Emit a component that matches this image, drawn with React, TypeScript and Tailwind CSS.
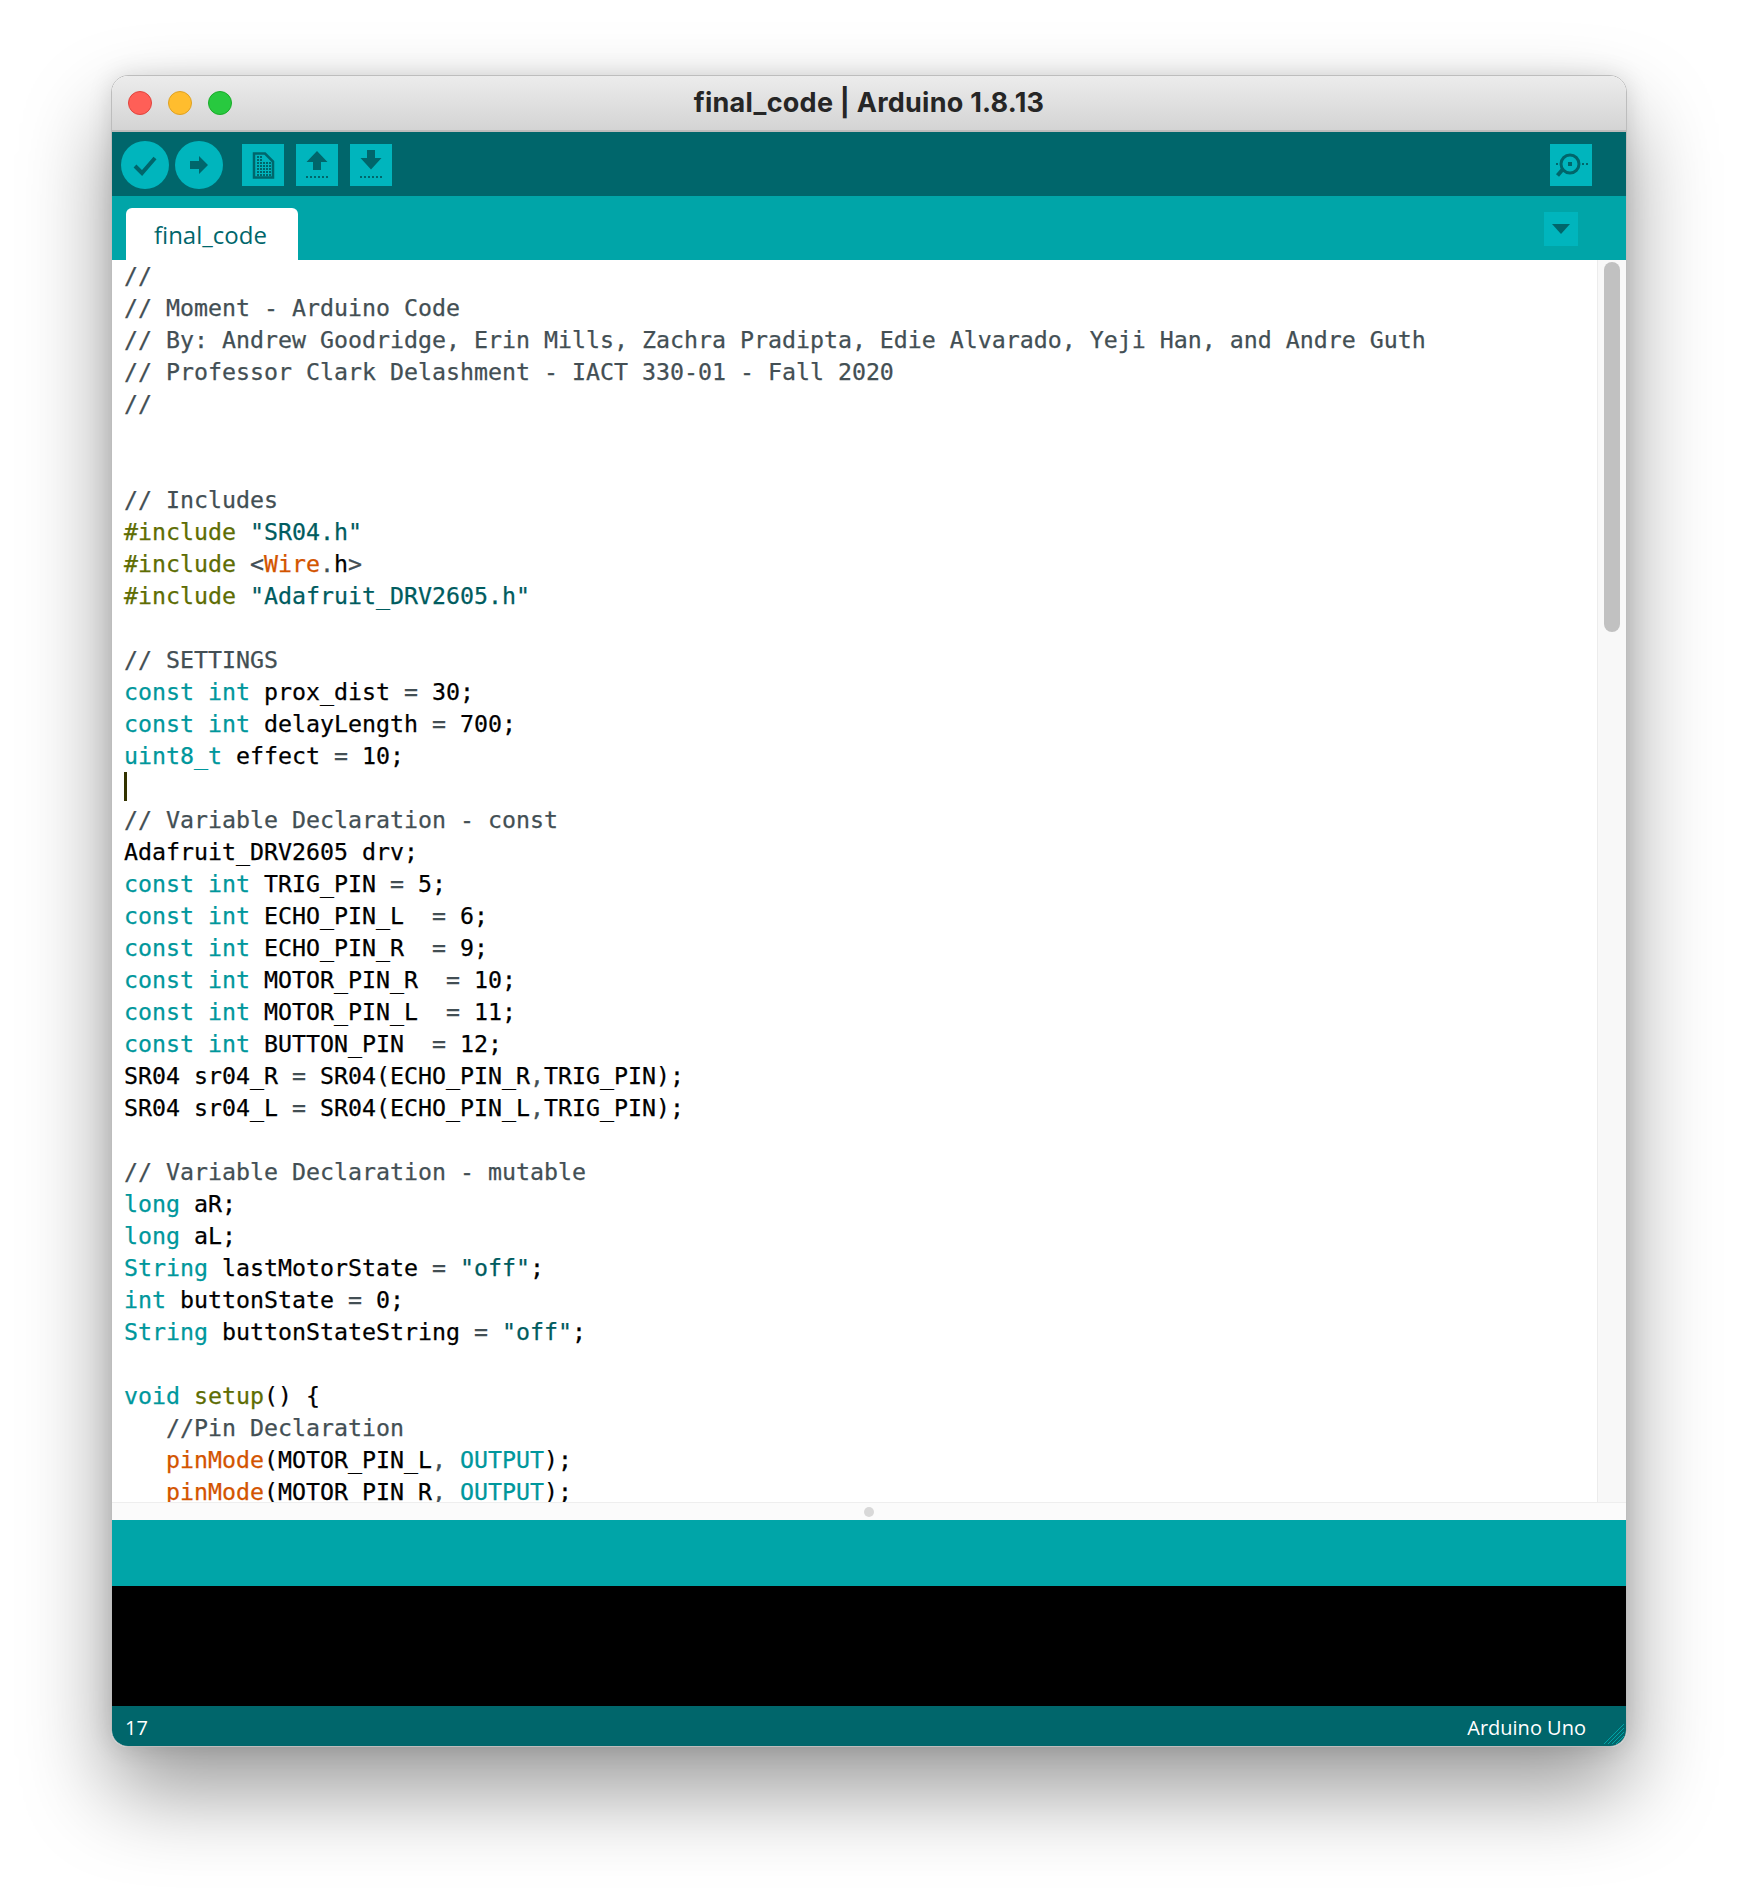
import React from "react";

type Tok = [string, string];

const tone: Record<string, string> = {
  c: "text-[#434f54]",
  k: "text-[#00979c]",
  f: "text-[#d35400]",
  s: "text-[#005c5f]",
  p: "text-[#5e6d03]",
  o: "text-[#434f54]",
  n: "text-black",
};

const constInt = (name: string, spaces: string, val: string): Tok[] => [
  ["k", "const int"],
  ["n", ` ${name}${spaces}`],
  ["o", "="],
  ["n", ` ${val};`],
];

const lines: Tok[][] = [
  [["c", "//"]],
  [["c", "// Moment - Arduino Code"]],
  [["c", "// By: Andrew Goodridge, Erin Mills, Zachra Pradipta, Edie Alvarado, Yeji Han, and Andre Guth"]],
  [["c", "// Professor Clark Delashment - IACT 330-01 - Fall 2020"]],
  [["c", "//"]],
  [],
  [],
  [["c", "// Includes"]],
  [["p", "#include"], ["s", ' "SR04.h"']],
  [["p", "#include"], ["o", " <"], ["f", "Wire"], ["o", "."], ["n", "h"], ["o", ">"]],
  [["p", "#include"], ["s", ' "Adafruit_DRV2605.h"']],
  [],
  [["c", "// SETTINGS"]],
  constInt("prox_dist", " ", "30"),
  constInt("delayLength", " ", "700"),
  [["k", "uint8_t"], ["n", " effect "], ["o", "="], ["n", " 10;"]],
  [],
  [["c", "// Variable Declaration - const"]],
  [["n", "Adafruit_DRV2605 drv;"]],
  constInt("TRIG_PIN", " ", "5"),
  constInt("ECHO_PIN_L", "  ", "6"),
  constInt("ECHO_PIN_R", "  ", "9"),
  constInt("MOTOR_PIN_R", "  ", "10"),
  constInt("MOTOR_PIN_L", "  ", "11"),
  constInt("BUTTON_PIN", "  ", "12"),
  [["n", "SR04 sr04_R "], ["o", "="], ["n", " SR04(ECHO_PIN_R"], ["o", ","], ["n", "TRIG_PIN);"]],
  [["n", "SR04 sr04_L "], ["o", "="], ["n", " SR04(ECHO_PIN_L"], ["o", ","], ["n", "TRIG_PIN);"]],
  [],
  [["c", "// Variable Declaration - mutable"]],
  [["k", "long"], ["n", " aR;"]],
  [["k", "long"], ["n", " aL;"]],
  [["k", "String"], ["n", " lastMotorState "], ["o", "="], ["s", ' "off"'], ["n", ";"]],
  [["k", "int"], ["n", " buttonState "], ["o", "="], ["n", " 0;"]],
  [["k", "String"], ["n", " buttonStateString "], ["o", "="], ["s", ' "off"'], ["n", ";"]],
  [],
  [["k", "void"], ["n", " "], ["p", "setup"], ["n", "() {"]],
  [["c", "   //Pin Declaration"]],
  [["n", "   "], ["f", "pinMode"], ["n", "(MOTOR_PIN_L"], ["o", ","], ["n", " "], ["k", "OUTPUT"], ["n", ");"]],
  [["n", "   "], ["f", "pinMode"], ["n", "(MOTOR_PIN_R"], ["o", ","], ["n", " "], ["k", "OUTPUT"], ["n", ");"]],
];

const Dots = ({ y }: { y: number }) => (
  <path d={`M10 ${y}h22`} stroke="#00666b" strokeWidth="2" strokeDasharray="2 2" fill="none" />
);

const SquareBtn = ({ children }: { children: React.ReactNode }) => (
  <div className="h-[42px] w-[42px] bg-[#00b5bd]">
    <svg viewBox="0 0 42 42" className="h-[42px] w-[42px]">
      {children}
    </svg>
  </div>
);

const RoundBtn = ({ children }: { children: React.ReactNode }) => (
  <div className="h-12 w-12 rounded-full bg-[#00b5bd]">
    <svg viewBox="0 0 48 48" className="h-12 w-12">
      {children}
    </svg>
  </div>
);

const DocDots = () => {
  const cells = [];
  for (let r = 0; r < 7; r++) {
    for (let c = 0; c < 5; c++) {
      if (r < 2 && c > 1) continue;
      cells.push(<rect key={`${r}-${c}`} x={15 + c * 3} y={12 + r * 3} width="2" height="2" fill="#00666b" />);
    }
  }
  return <>{cells}</>;
};

export default function App() {
  return (
    <div className="min-h-[1894px] bg-white pt-[75px] pl-[111px] font-['Liberation_Sans',sans-serif]">
      <div className="flex h-[1672px] w-[1516px] flex-col overflow-hidden rounded-[17px] border border-[#bdbdbd] shadow-[0_44px_88px_rgba(0,0,0,0.4),0_0_24px_rgba(0,0,0,0.12)]">
        {/* title bar */}
        <div className="relative flex h-[56px] shrink-0 items-center justify-center border-b-2 border-[#bcbcbc] bg-gradient-to-b from-[#ececec] to-[#d4d4d4]">
          <div className="absolute left-[16px] top-[15px] flex gap-4">
            <span className="h-6 w-6 rounded-full border border-[#e0443e] bg-[#ff5f57]" />
            <span className="h-6 w-6 rounded-full border border-[#dea123] bg-[#ffbd2e]" />
            <span className="h-6 w-6 rounded-full border border-[#1aab29] bg-[#28c93f]" />
          </div>
          <span className="font-['Inter',sans-serif] text-[27px] font-bold tracking-[0.25px] text-[#262626]">final_code | Arduino 1.8.13</span>
        </div>

        {/* toolbar */}
        <div className="flex h-[64px] shrink-0 items-center bg-[#00666b] pl-[9px] pr-[34px] pt-[2px]">
          <div className="flex gap-[6px]">
            <RoundBtn>
              <path d="M14 25l7 7 13-15" fill="none" stroke="#00666b" strokeWidth="4" />
            </RoundBtn>
            <RoundBtn>
              <path d="M15 20h9v-5l9 9-9 9v-5h-9z" fill="#00666b" />
            </RoundBtn>
          </div>
          <div className="ml-[19px] flex gap-3">
            <SquareBtn>
              <path d="M12 9.5h11l8 8v16h-19z" fill="none" stroke="#00666b" strokeWidth="2.5" />
              <DocDots />
            </SquareBtn>
            <SquareBtn>
              <path d="M21 7l10.5 11h-6.5v8h-8v-8h-6.5z" fill="#00666b" />
              <Dots y={33} />
            </SquareBtn>
            <SquareBtn>
              <path d="M17 6h8v8h6.5L21 25.5 10.5 14H17z" fill="#00666b" />
              <Dots y={33} />
            </SquareBtn>
          </div>
          <div className="ml-auto">
            <SquareBtn>
              <circle cx="20" cy="20" r="9" fill="none" stroke="#00666b" strokeWidth="3" />
              <rect x="18" y="18" width="4" height="4" fill="#00666b" />
              <path d="M13 25l-5.5 6.5" stroke="#00666b" strokeWidth="4" />
              <path d="M6 20h2M32 20h2M36 20h2" stroke="#00666b" strokeWidth="2" />
            </SquareBtn>
          </div>
        </div>

        {/* tab row */}
        <div className="flex h-[64px] shrink-0 items-end justify-between bg-[#00a5a8] pl-[14px] pr-[48px]">
          <div className="flex h-[52px] w-[172px] items-center rounded-t-[6px] bg-white pl-[28px] pt-[2px] font-['Open_Sans',sans-serif] text-[24px] text-[#00666b]">
            final_code
          </div>
          <div className="mb-[14px] flex h-[34px] w-[34px] items-center justify-center bg-[#00b5bd]">
            <svg viewBox="0 0 18 10" className="h-[10px] w-[18px]">
              <path d="M0 0h18l-9 10z" fill="#00666b" />
            </svg>
          </div>
        </div>

        {/* editor */}
        <div className="flex h-[1242px] shrink-0 overflow-hidden bg-white">
          <div className="flex-1 pl-[12px] font-['DejaVu_Sans_Mono',monospace] text-[23.25px] leading-[32px] [-webkit-text-stroke:0.25px]">
            {lines.map((line, i) => (
              <div key={i} className="relative h-[32px] whitespace-pre">
                {i === 16 && <span className="absolute left-0 top-0 h-[29px] w-[3px] bg-[#333300]" />}
                {line.map(([kind, text], j) => (
                  <span key={j} className={tone[kind]}>
                    {text}
                  </span>
                ))}
              </div>
            ))}
          </div>
          <div className="w-[29px] border-l border-[#ececec] bg-[#f8f8f8] pl-[6px] pt-[2px]">
            <div className="h-[370px] w-4 rounded-full bg-[#c1c1c1]" />
          </div>
        </div>

        {/* split handle */}
        <div className="flex h-[18px] shrink-0 items-center justify-center border-t border-[#eeeeee] bg-[#fbfbfb]">
          <span className="h-[10px] w-[10px] rounded-full bg-[#d8d8d8]" />
        </div>

        <div className="h-[66px] shrink-0 bg-[#00a5a8]" />
        <div className="h-[120px] shrink-0 bg-black" />

        {/* footer */}
        <div className="relative flex flex-1 items-center justify-between bg-[#00666b] pl-[13px] pr-[40px] pt-[4px] font-['Open_Sans',sans-serif] text-[20px] text-white">
          <span>17</span>
          <span>Arduino Uno</span>
          <svg viewBox="0 0 24 24" className="absolute bottom-0 right-0 h-6 w-6">
            <path d="M2 22L22 2M6 22L22 6M10 22L22 10M14 22l8-8" stroke="#00a5a8" strokeWidth="1" fill="none" />
          </svg>
        </div>
      </div>
    </div>
  );
}
